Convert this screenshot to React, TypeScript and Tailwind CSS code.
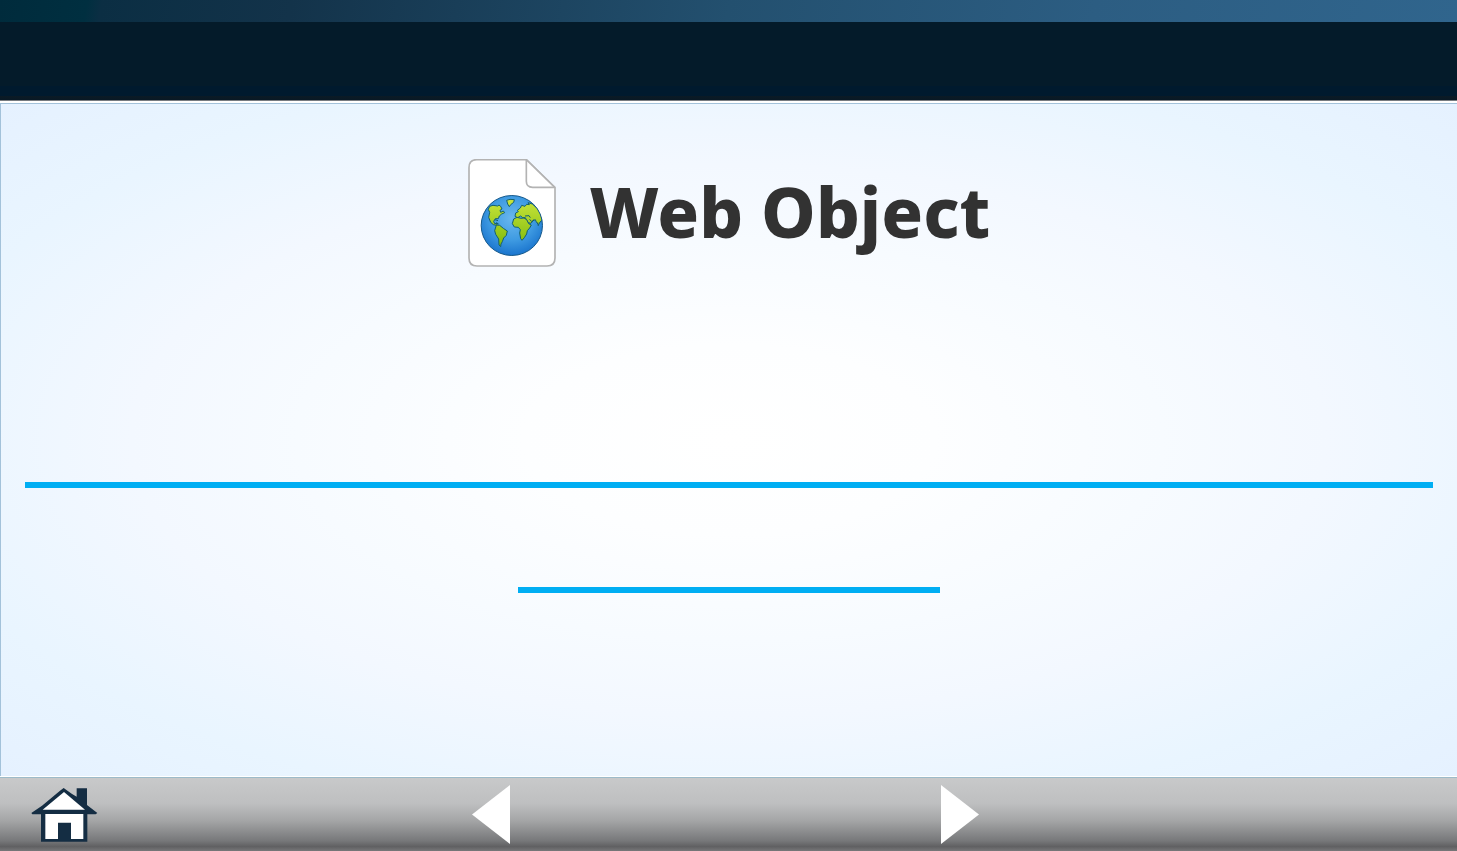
function WebDocumentIcon() {
  return (
    <svg viewBox="27 27 264 324" className="h-[108px] w-[88px] shrink-0" aria-hidden="true">
      <defs>
        <radialGradient id="ocean" cx="0.5" cy="0.38" r="0.65">
          <stop offset="0" stopColor="#69b7ee" />
          <stop offset="0.55" stopColor="#3f9be2" />
          <stop offset="1" stopColor="#1670cb" />
        </radialGradient>
        <linearGradient id="land" x1="0" y1="145" x2="0" y2="295" gradientUnits="userSpaceOnUse">
          <stop offset="0" stopColor="#cbe63c" />
          <stop offset="1" stopColor="#7cb80a" />
        </linearGradient>
        <clipPath id="globe">
          <ellipse cx="158.500" cy="226.500" rx="92" ry="90" />
        </clipPath>
      </defs>
      <path d="M53 29H202L288 113V324Q288 348 264 348H54Q30 348 30 324V53Q30 29 53 29Z" fill="#fff" stroke="#b3b3b3" strokeWidth="5" />
      <path d="M202 30V94Q202 112 221 112H287" fill="#fff" stroke="#b3b3b3" strokeWidth="5" />
      <path d="M202 29L288 113" stroke="#b3b3b3" strokeWidth="5" />
      <ellipse cx="158.500" cy="226.500" rx="92" ry="90" fill="url(#ocean)" />
      <g clipPath="url(#globe)" fill="url(#land)" stroke="#155f70" strokeWidth="3" strokeLinejoin="round">
        <path d="M92 169L102 166L116 168L120 165L125 169L129 177L123 181L125 187L133 183L137 188L128 192L121 198L118 206L109 206L104 214L107 221L115 220L113 226L103 224L95 217L89 202L92 187L88 178Z" />
        <path d="M143 151L153 148L166 149L164 157L155 164L151 170L146 162Z" />
        <path d="M112 225L122 226L133 235L145 243L142 256L134 264L130 275L126 282L125 290L120 285L119 267L110 253L107 242Z" />
        <path d="M168 199L170 189L178 185L175 181L184 174L188 166L198 169L203 163L211 164L207 158L220 162L235 175L246 191L249 211L243 216L239 224L233 218L229 209L222 212L216 220L207 218L202 209L199 203L191 203L185 198L176 203Z" />
        <path d="M164 207L174 202L186 205L195 204L203 209L209 221L217 225L212 234L205 242L203 252L196 263L189 271L185 266L182 249L184 239L178 232L166 231L160 221Z" />
        <path d="M108 209L117 212M111 218L119 222M198 198L210 197L214 203M212 208L218 215L225 209M236 217L238 228" fill="none" />
      </g>
      <ellipse cx="158.500" cy="226.500" rx="92" ry="90" fill="none" stroke="#16598b" strokeWidth="3" />
    </svg>
  );
}

function HomeIcon() {
  return (
    <svg viewBox="93 51 201 165" className="h-[55px] w-[67px]" aria-hidden="true">
      <path d="M191 54L215 71L230 80V55H261V105L292 129L287 133H262V215H123V133H97L94 129L126 107L180 62Z" fill="#142d43" />
      <path d="M192 66L255 119H128Z" fill="#fff" />
      <path d="M136 132H250V207H213V158H174V207H136Z" fill="#fff" />
    </svg>
  );
}

export default function App() {
  return (
    <div className="flex min-h-screen flex-col bg-white font-['Noto_Sans','Open_Sans',sans-serif]">
      <header>
        <div className="h-[22px] bg-[linear-gradient(100deg,#002b3c_0%,#002f40_6%,#0b2e43_7%,#13334a_20%,#23506f_50%,#2c5d82_75%,#30658d_100%)]" />
        <div className="h-[79px] border-b border-[#777b80] bg-[linear-gradient(#041b2a_0%,#041b2a_87%,#0b1a25_96%,#081925_100%)]">
          <div className="flex h-full flex-col justify-end pb-1">
            <div className="h-[10px] bg-[#001a2e]" />
          </div>
        </div>
      </header>

      <main className="mt-[2px] mb-px flex flex-1 flex-col items-center border-t border-l border-[#a3c2da] bg-[radial-gradient(ellipse_at_50%_50%,#ffffff_0%,#fdfeff_20%,#f7fbff_42%,#f3f8ff_58%,#e9f5ff_80%,#e5f1ff_100%)] px-6 pt-[55px]">
        <div className="flex items-start justify-center gap-[34px]">
          <WebDocumentIcon />
          <h1 className="text-[69px] leading-[104px] font-extrabold text-[#323232]">Web Object</h1>
        </div>
        <hr className="mt-[215px] w-full border-0 border-t-6 border-[#00aef3]" />
        <hr className="mt-[99px] w-[30%] border-0 border-t-6 border-[#00aef3]" />
      </main>

      <footer className="grid grid-cols-[1fr_auto_1fr] items-center border-t border-[#9dbbc9] bg-[linear-gradient(#c8c9ca_0%,#bebfc0_35%,#a5a6a7_58%,#77787a_86%,#606062_94%,#777779_100%)] pt-[7px] pr-[6px] pb-[7px]">
        <a href="#home" aria-label="Home" className="ml-[31px] justify-self-start">
          <HomeIcon />
        </a>
        <nav aria-label="Page navigation" className="flex gap-[431px]">
          <button type="button" aria-label="Previous" className="block">
            <svg viewBox="0 0 38 59" className="h-[59px] w-[38px]" aria-hidden="true">
              <path d="M0 29.500L38 0V59Z" fill="#fff" />
            </svg>
          </button>
          <button type="button" aria-label="Next" className="block">
            <svg viewBox="0 0 38 59" className="h-[59px] w-[38px]" aria-hidden="true">
              <path d="M38 29.500L0 0V59Z" fill="#fff" />
            </svg>
          </button>
        </nav>
      </footer>
    </div>
  );
}
